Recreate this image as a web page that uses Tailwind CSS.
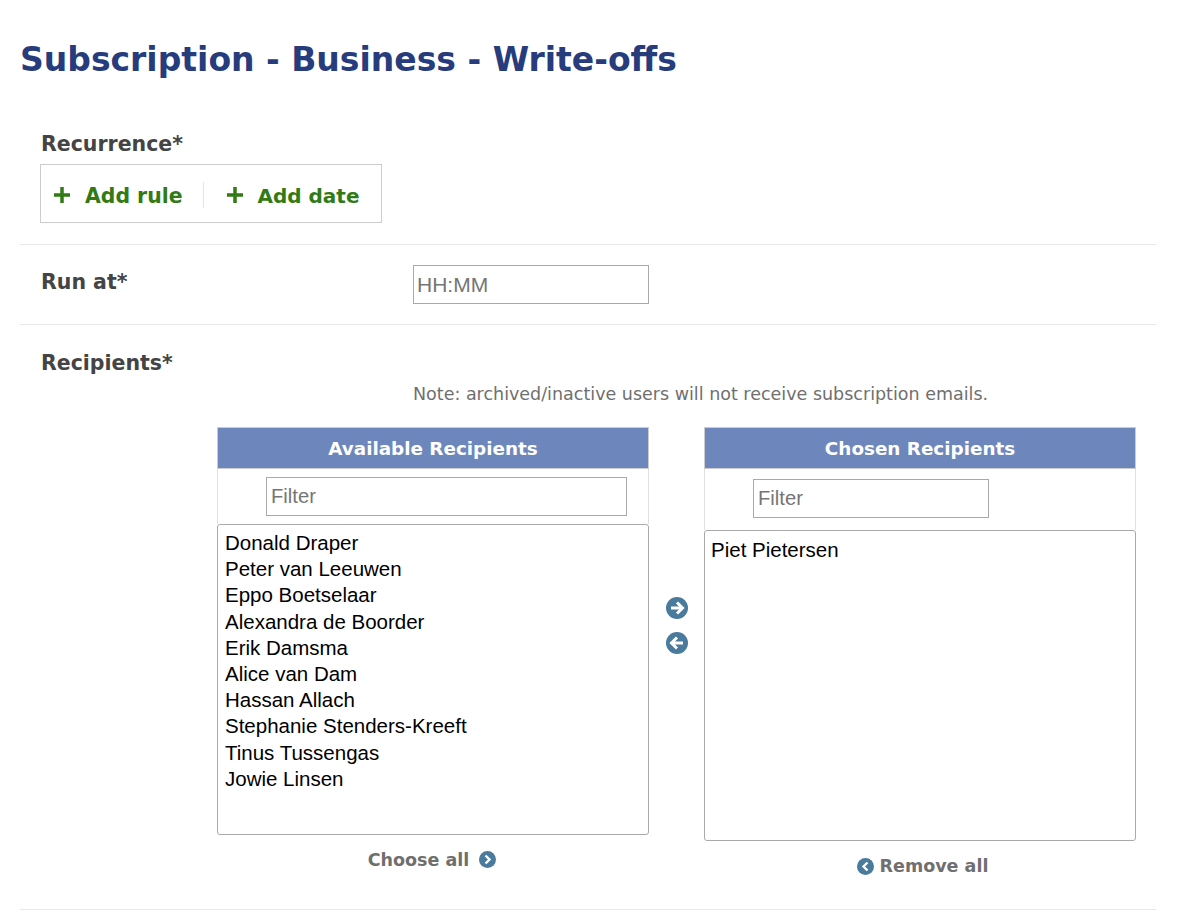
<!doctype html>
<html><head><meta charset="utf-8"><script src="https://cdn.jsdelivr.net/npm/@tailwindcss/browser@4"></script></head>
<body class="bg-white h-[920px] overflow-hidden font-['DejaVu_Sans',sans-serif]">
<div class="pl-5 pr-[26px]">
<h1 class="pt-[40px] h-[104px] text-[33px] leading-[40px] font-bold text-[#263c7c]">Subscription - Business - Write-offs</h1>
<section class="h-[141px] border-b border-[#e8e8e8] pl-[20px] pt-[27px]">
<div class="pl-px text-[20.5px] leading-[27px] font-bold text-[#444]">Recurrence*</div>
<div class="mt-[6px] w-[342px] h-[59px] border border-[#ccc] flex items-center pl-[12px] pt-[5px] text-[20.4px] font-bold text-[#327a14]">
<span class="flex items-center gap-[14px]"><svg class="w-[18px] h-[18px] -mt-[2px]" viewBox="0 0 18 18"><path d="M9 1v16M1 9h16" stroke="#327a14" stroke-width="3.5"/></svg>Add rule</span>
<span class="w-px h-[26px] -mt-[3px] bg-[#e4e4e4] ml-[21px] mr-[22px]"></span>
<span class="flex items-center gap-[13px] text-[20px]"><svg class="w-[18px] h-[18px] -mt-[2px]" viewBox="0 0 18 18"><path d="M9 1v16M1 9h16" stroke="#327a14" stroke-width="3.5"/></svg>Add date</span>
</div>
</section>
<section class="h-[80px] border-b border-[#e8e8e8] flex pl-[21px] pt-[20px]">
<div class="w-[372px] text-[20.5px] leading-[34px] font-bold text-[#444]">Run at*</div>
<input placeholder="HH:MM" class="w-[236px] h-[39px] border border-[#aaa] px-[3px] text-[21px] font-['Liberation_Sans',sans-serif] placeholder:text-[#757575]">
</section>
<section class="h-[585px] border-b border-[#e8e8e8] relative">
<div class="pl-[21px] pt-[25px] text-[20.5px] leading-[27px] font-bold text-[#444]">Recipients*</div>
<p class="pl-[393px] mt-[5px] text-[17.5px] leading-[24px] text-[#6f6f6f]">Note: archived/inactive users will not receive subscription emails.</p>
<div class="mt-[21px] ml-[197px] flex items-start">
<div class="w-[432px]">
<div class="h-[42px] pt-px bg-[#6d87bd] border border-[#ccc] flex items-center justify-center text-white font-bold text-[18.35px]">Available Recipients</div>
<div class="h-[55px] border-x border-[#e0e0e0] pt-[8px] pl-[48px]"><input placeholder="Filter" class="w-[361px] h-[39px] border border-[#aaa] px-[4px] text-[20.2px] font-['Liberation_Sans',sans-serif] placeholder:text-[#757575]"></div>
<ul class="h-[311px] border border-[#aaa] rounded-[3px] py-[5px] px-[7px] text-[20.5px] leading-[26.2px] text-black font-['Liberation_Sans',sans-serif]">
<li>Donald Draper</li><li>Peter van Leeuwen</li><li>Eppo Boetselaar</li><li>Alexandra de Boorder</li><li>Erik Damsma</li><li>Alice van Dam</li><li>Hassan Allach</li><li>Stephanie Stenders-Kreeft</li><li>Tinus Tussengas</li><li>Jowie Linsen</li>
</ul>
<div class="mt-[12px] -ml-[2px] flex items-center justify-center gap-[10px] text-[17.5px] font-bold text-[#6f6f6f]">Choose all
<svg class="w-[17px] h-[17px] -mt-[2px]" viewBox="0 0 17 17"><circle cx="8.5" cy="8.5" r="8.5" fill="#4a7a9c"/><path d="M6.5 4.5 10.5 8.5 6.5 12.5" fill="none" stroke="#fff" stroke-width="2.4"/></svg></div>
</div>
<div class="w-[55px] flex flex-col items-center pt-[170px] gap-[13px]">
<svg class="w-[22px] h-[22px]" viewBox="0 0 22 22"><circle cx="11" cy="11" r="11" fill="#4a7a9c"/><path d="M5 11h11M11 5.5 16.5 11 11 16.5" fill="none" stroke="#fff" stroke-width="3"/></svg>
<svg class="w-[22px] h-[22px]" viewBox="0 0 22 22"><circle cx="11" cy="11" r="11" fill="#4a7a9c"/><path d="M17 11H6M11 5.5 5.5 11 11 16.5" fill="none" stroke="#fff" stroke-width="3"/></svg>
</div>
<div class="w-[432px]">
<div class="h-[42px] pt-px bg-[#6d87bd] border border-[#ccc] flex items-center justify-center text-white font-bold text-[18.35px]">Chosen Recipients</div>
<div class="h-[61px] border-x border-[#e0e0e0] pt-[10px] pl-[48px]"><input placeholder="Filter" class="w-[236px] h-[39px] border border-[#aaa] px-[4px] text-[20.2px] font-['Liberation_Sans',sans-serif] placeholder:text-[#757575]"></div>
<ul class="h-[311px] border border-[#aaa] rounded-[3px] py-[6px] px-[6px] text-[20.5px] leading-[26.2px] text-black font-['Liberation_Sans',sans-serif]"><li>Piet Pietersen</li></ul>
<div class="mt-[12px] pl-[5px] flex items-center justify-center gap-[6px] text-[17.5px] font-bold text-[#6f6f6f]">
<svg class="w-[17px] h-[17px]" viewBox="0 0 17 17"><circle cx="8.5" cy="8.5" r="8.5" fill="#4a7a9c"/><path d="M10.5 4.5 6.5 8.5 10.5 12.5" fill="none" stroke="#fff" stroke-width="2.4"/></svg>Remove all</div>
</div>
</div>
</section>
</div>
</body></html>
